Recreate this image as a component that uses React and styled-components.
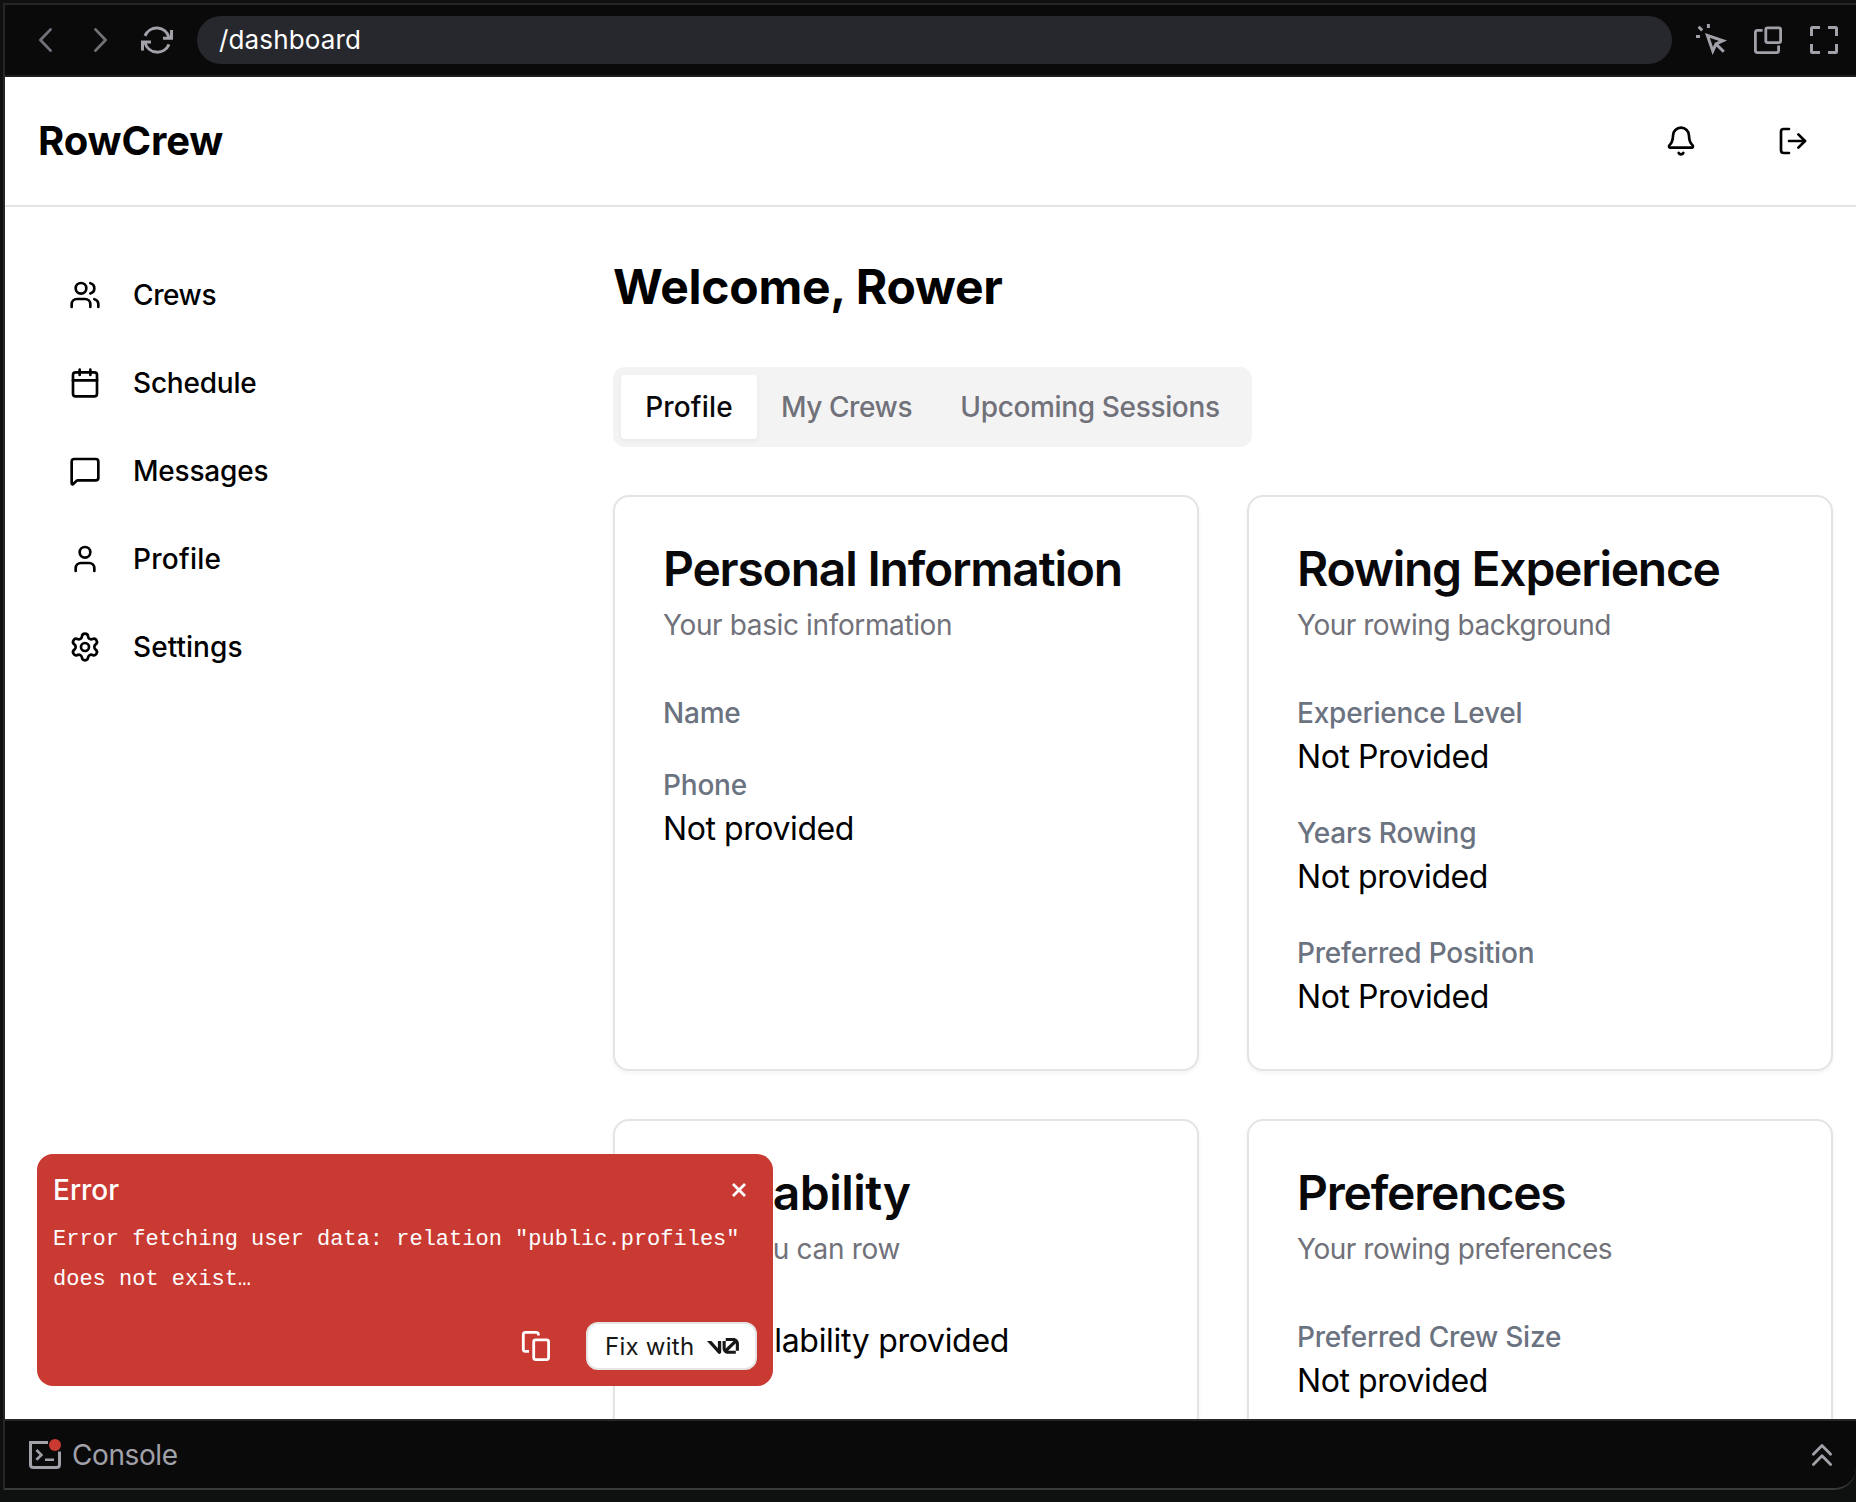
import React from "react";
import styled, { createGlobalStyle } from "styled-components";
import { Bell, LogOut, Users, Calendar, MessageSquare, User, Settings } from "lucide-react";

const Global = createGlobalStyle`
  *, *::before, *::after { box-sizing: border-box; }
  html, body { margin: 0; height: 100%; background: #0f1010; }
  body { font-family: Inter, "Liberation Sans", sans-serif; color: #000; overflow: hidden; }
  h1, h2, h3, p, dl, dd, dt { margin: 0; font-weight: inherit; font-size: inherit; }
  button { font: inherit; color: inherit; border: 0; background: none; padding: 0; display: flex; align-items: center; }
  svg { display: block; flex: none; }
`;

const Shell = styled.div`
  width: 1856px;
  height: 1502px;
  padding: 3px 0 12px 3px;
  background: #0f1010;
`;

const Frame = styled.div`
  position: relative;
  display: flex;
  flex-direction: column;
  height: 1487px;
  border: 2px solid #262626;
  border-right: 0;
  border-bottom-color: #3a3a3a;
  border-bottom-right-radius: 22px;
  background: #0a0a0a;
  overflow: hidden;
`;

const Toolbar = styled.div`
  display: flex;
  align-items: center;
  height: 72px;
  flex: none;
  padding: 0 16px 0 24px;
  border-bottom: 2px solid #1f1d20;
  color: #a1a1aa;
`;

const NavButton = styled.button`
  color: ${(p) => (p.$dim ? "#71717a" : "#a1a1aa")};
  margin-right: ${(p) => p.$gap}px;
`;

const Address = styled.div`
  flex: 1;
  height: 48px;
  border-radius: 24px;
  background: #27282d;
  color: #fff;
  display: flex;
  align-items: center;
  padding: 1px 0 0 22px;
  margin-right: 24px;
`;

const Tools = styled.div`
  display: flex;
  gap: 24px;
`;

const Page = styled.div`
  flex: 1;
  min-height: 0;
  background: #fff;
  display: flex;
  flex-direction: column;
  overflow: hidden;
`;

const Header = styled.header`
  height: 130px;
  flex: none;
  border-bottom: 2px solid #e4e4e5;
  display: flex;
  align-items: center;
  justify-content: space-between;
  padding: 0 47px 0 33px;
`;

const HeaderActions = styled.div`
  display: flex;
  gap: 80px;
`;

const T = styled.span`
  display: block;
  white-space: pre;
  font-size: ${(p) => p.$size}px;
  line-height: ${(p) => p.$lh || p.$size * 1.4}px;
  font-weight: ${(p) => p.$w || 400};
  letter-spacing: ${(p) => p.$ls || 0}px;
  text-indent: ${(p) => p.$indent || 0}px;
`;

const Body = styled.div`
  flex: 1;
  min-height: 0;
  display: flex;
`;

const Sidebar = styled.nav`
  width: 608px;
  flex: none;
  padding: 48px 32px;
  display: flex;
  flex-direction: column;
  gap: 8px;
`;

const SideItem = styled.a`
  height: 80px;
  display: flex;
  align-items: center;
  gap: 32px;
  padding-left: 32px;

  span { padding-top: 2px; }
`;

const Main = styled.main`
  width: 1220px;
  flex: none;
  padding-top: 56px;
`;

const Tabs = styled.div`
  display: flex;
  width: 639px;
  height: 80px;
  margin: 56px 0 48px;
  padding: 8px;
  border-radius: 12px;
  background: #f3f3f4;
  color: #71717a;
`;

const Tab = styled.button`
  height: 64px;
  width: ${(p) => p.$width}px;
  padding-top: 2px;
  justify-content: center;
  border-radius: 4px;
  ${(p) => p.$active && "background: #fff; color: #09090b; box-shadow: 0 2px 4px rgba(0,0,0,.05);"}
`;

const Cards = styled.div`
  display: grid;
  grid-template-columns: 586px 586px;
  grid-auto-rows: 576px;
  gap: 48px;
`;

const Card = styled.section`
  border: 2px solid #e4e4e5;
  border-radius: 16px;
  box-shadow: 0 2px 4px rgba(0, 0, 0, 0.05);
  padding: 48px;
  background: #fff;
`;

const CardTitle = styled.h2`
  color: #09090b;
`;

const CardNote = styled.p`
  color: #71717a;
  margin: 12px 0 48px;
`;

const Fields = styled.dl`
  display: flex;
  flex-direction: column;
  gap: 32px;
`;

const FieldLabel = styled.dt`
  color: #6b7280;
`;

const Toast = styled.div`
  position: absolute;
  left: 32px;
  bottom: 102px;
  width: 736px;
  height: 232px;
  border-radius: 16px;
  background: #c93a33;
  color: #fff;
  padding: 16px;
  display: flex;
  flex-direction: column;
`;

const ToastHead = styled.div`
  display: flex;
  align-items: center;
  justify-content: space-between;
  height: 40px;
  padding-right: 10px;

  span { padding-top: 2px; }
`;

const ToastText = styled.p`
  margin-top: 10px;
  font-family: "Liberation Mono", monospace;
`;

const ToastActions = styled.div`
  margin-top: auto;
  display: flex;
  align-items: center;
  justify-content: flex-end;
  gap: 34px;
`;

const FixButton = styled.button`
  width: 171px;
  height: 48px;
  border: 2px solid #e5e5e5;
  border-radius: 12px;
  background: #fff;
  color: #171717;
  padding-left: 17px;
  gap: 13px;

  span { padding-top: 2px; }
`;

const ConsoleBar = styled.footer`
  height: 69px;
  flex: none;
  border-top: 2px solid #27272a;
  color: #a1a1aa;
  display: flex;
  align-items: center;
  justify-content: space-between;
  padding: 1px 18px 0 24px;
`;

const ConsoleLabel = styled.div`
  display: flex;
  align-items: center;
  gap: 11px;

  span { padding-top: 2px; }
`;

const Glyph = ({ size = 32, width = 1.5, round, children }) => (
  <svg
    width={size}
    height={size}
    viewBox="0 0 16 16"
    fill="none"
    stroke="currentColor"
    strokeWidth={width}
    strokeLinecap={round ? "round" : "butt"}
    strokeLinejoin={round ? "round" : "miter"}
  >
    {children}
  </svg>
);

const BackIcon = () => <Glyph round width={1.4}><path d="M10.8 2.7 5.7 8l5.1 5.3" /></Glyph>;
const ForwardIcon = () => <Glyph round width={1.4}><path d="M5.7 2.7 10.8 8l-5.1 5.3" /></Glyph>;
const ReloadIcon = () => (
  <Glyph>
    <path d="M2 5.9a6.35 6.35 0 0 1 12 .9M14 10.2a6.35 6.35 0 0 1-12-.9" />
    <path d="M15.25 3v4.1H11M.75 13.2V9.05H5" />
  </Glyph>
);
const InspectIcon = () => (
  <Glyph width={1.5}>
    <path d="M5.7 5.7 13.5 8.4 10 10 8.4 13.500ZM10 10l3.9 3.9M6.2 0v2M0 6.3h2M1.3 1.4l1.8 1.8" />
  </Glyph>
);
const PopOutIcon = () => (
  <Glyph width={1.4}>
    <path d="M5.3 3.2H2.7q-1 0-1 1v9.1q0 1 1 1h9.6q1 0 1-1V10.8" />
    <rect x="6.9" y="1.9" width="7.4" height="7.4" rx="0.9" />
  </Glyph>
);
const ExpandIcon = () => (
  <Glyph>
    <path d="M1.75 6V2.25q0-.5.5-.5H6M10 1.75h3.75q.5 0 .5.5V6M14.25 10v3.75q0 .5-.5.5H10M6 14.25H2.25q-.5 0-.5-.5V10" />
  </Glyph>
);
const CopyIcon = () => (
  <Glyph width={1.4}>
    <path d="M9.2 2.7V2.2q0-1-1-1H2.65q-1 0-1 1v7.45q0 1 1 1H4.5" />
    <rect x="6.85" y="4.9" width="7.45" height="9.9" rx="1" />
  </Glyph>
);
const TerminalIcon = () => (
  <Glyph>
    <path d="M9.5 1.75H.75V12.75q0 1.5 1.5 1.5h11.5q1.5 0 1.5-1.500V6.2" />
    <path d="M3.7 5.5 6.2 7.95 3.7 10.4M8 10.4h4.5" strokeWidth="1.3" />
    <circle cx="13" cy="3" r="3" fill="#c93a33" stroke="none" />
  </Glyph>
);
const CollapseIcon = () => (
  <Glyph round width={1.4}><path d="M3.7 7.6 8 3.3l4.3 4.3M3.7 12.7 8 8.4l4.3 4.3" /></Glyph>
);
const V0Logo = () => (
  <svg width="32" height="16" viewBox="0 0 40 20" fill="currentColor">
    <path d="M23.392 0h9.527c3.863 0 6.995 3.132 6.995 6.995v9.085h-3.913V6.995q0-.14-.011-.277l-9.527 9.361.097.001h9.441v3.696h-9.441c-3.864 0-7.081-3.162-7.081-7.025V3.689h3.913v9.062q0 .262.040.516l9.736-9.567a3 3 0 0 0-.249-.011h-9.527V0Z" />
    <path d="M13.769 19.096 0 3.688h5.539l8.084 9.046V3.688h4.130v13.887c0 2.096-2.588 3.084-3.984 1.521Z" />
  </svg>
);

const navItems = [
  { label: "Crews", Icon: Users, ls: -0.4 },
  { label: "Schedule", Icon: Calendar, ls: -0.2 },
  { label: "Messages", Icon: MessageSquare, ls: -0.2 },
  { label: "Profile", Icon: User, ls: 0.25 },
  { label: "Settings", Icon: Settings, ls: 0.05 },
];

const tabs = [
  { label: "Profile", width: 136, ls: 0.15, active: true },
  { label: "My Crews", width: 179, ls: -0.4 },
  { label: "Upcoming Sessions", width: 308, ls: -0.35 },
];

const cards = [
  {
    title: "Personal Information", titleLs: -1.2,
    note: "Your basic information", noteLs: -0.37,
    fields: [["Name", ""], ["Phone", "Not provided"]],
  },
  {
    title: "Rowing Experience", titleLs: -1.28,
    note: "Your rowing background", noteLs: -0.48,
    fields: [["Experience Level", "Not Provided"], ["Years Rowing", "Not provided"], ["Preferred Position", "Not Provided"]],
  },
  {
    title: "Availability", titleLs: -0.5,
    note: "When you can row", noteLs: -0.3, noteIndent: -5,
    text: "No availability provided",
  },
  {
    title: "Preferences", titleLs: -1.2,
    note: "Your rowing preferences", noteLs: -0.46,
    fields: [["Preferred Crew Size", "Not provided"]],
  },
];

export default function App() {
  return (
    <Shell>
      <Global />
      <Frame>
        <Toolbar>
          <NavButton $dim $gap={23}><BackIcon /></NavButton>
          <NavButton $dim $gap={25}><ForwardIcon /></NavButton>
          <NavButton $gap={24}><ReloadIcon /></NavButton>
          <Address><T $size={26} $ls={0.15}>/dashboard</T></Address>
          <Tools>
            <InspectIcon />
            <PopOutIcon />
            <ExpandIcon />
          </Tools>
        </Toolbar>
        <Page>
          <Header>
            <T as="h1" $size={40} $w={700} $ls={-0.1}>RowCrew</T>
            <HeaderActions>
              <Bell size={32} />
              <LogOut size={32} />
            </HeaderActions>
          </Header>
          <Body>
            <Sidebar>
              {navItems.map(({ label, Icon, ls }) => (
                <SideItem key={label}>
                  <Icon size={32} />
                  <T $size={28} $w={500} $ls={ls}>{label}</T>
                </SideItem>
              ))}
            </Sidebar>
            <Main>
              <T as="h2" $size={48} $w={700} $lh={48} $ls={-0.25}>Welcome, Rower</T>
              <Tabs>
                {tabs.map((t) => (
                  <Tab key={t.label} $active={t.active} $width={t.width}>
                    <T $size={28} $w={500} $ls={t.ls}>{t.label}</T>
                  </Tab>
                ))}
              </Tabs>
              <Cards>
                {cards.map((c) => (
                  <Card key={c.title}>
                    <CardTitle><T $size={48} $w={600} $lh={48} $ls={c.titleLs}>{c.title}</T></CardTitle>
                    <CardNote><T $size={28} $lh={40} $ls={c.noteLs} $indent={c.noteIndent}>{c.note}</T></CardNote>
                    {c.fields ? (
                      <Fields>
                        {c.fields.map(([label, value]) => (
                          <div key={label}>
                            <FieldLabel><T $size={28} $w={500} $lh={40} $ls={-0.2}>{label}</T></FieldLabel>
                            {value && <dd><T $size={32} $lh={48} $ls={-0.42}>{value}</T></dd>}
                          </div>
                        ))}
                      </Fields>
                    ) : (
                      <p><T $size={32} $lh={48} $ls={-0.3}>{c.text}</T></p>
                    )}
                  </Card>
                ))}
              </Cards>
            </Main>
          </Body>
        </Page>
        <Toast>
          <ToastHead>
            <T $size={28} $w={500}>Error</T>
            <Glyph size={16}><path d="m2 2 12 12M14 2 2 14" strokeWidth="2.8" /></Glyph>
          </ToastHead>
          <ToastText>
            <T $size={22} $lh={40}>{'Error fetching user data: relation "public.profiles"\ndoes not exist…'}</T>
          </ToastText>
          <ToastActions>
            <CopyIcon />
            <FixButton>
              <T $size={24} $ls={0.25}>Fix with</T>
              <V0Logo />
            </FixButton>
          </ToastActions>
        </Toast>
        <ConsoleBar>
          <ConsoleLabel>
            <TerminalIcon />
            <T $size={28} $ls={-0.4}>Console</T>
          </ConsoleLabel>
          <CollapseIcon />
        </ConsoleBar>
      </Frame>
    </Shell>
  );
}
